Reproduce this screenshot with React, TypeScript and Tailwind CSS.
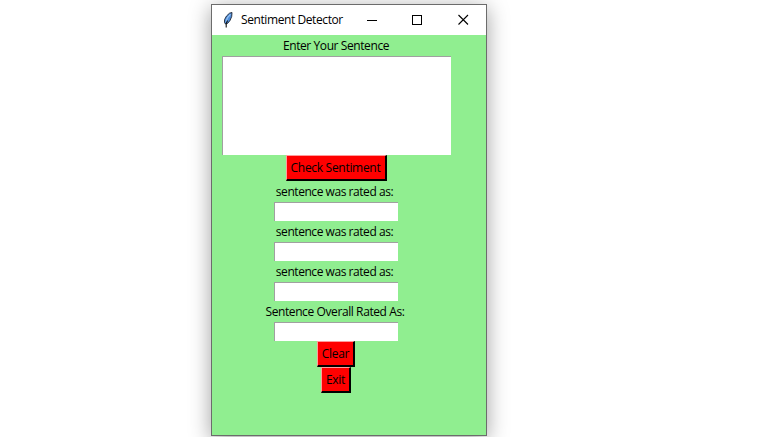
import type { ReactNode } from "react";

function Label({ children, className }: { children: ReactNode; className: string }) {
  return <div className={`flex h-[21px] items-center justify-center pt-px whitespace-nowrap ${className}`}>{children}</div>;
}

function Field() {
  return <input className="block h-[19px] w-[124px] border-t border-l border-[#a0a0a0] bg-white px-1 outline-none" />;
}

function PushButton({ children, className }: { children: ReactNode; className: string }) {
  return (
    <button
      className={`flex h-[26px] items-center justify-center border-t border-r-2 border-b-2 border-l border-t-[#ff9c9c] border-r-black border-b-black border-l-[#ff9c9c] bg-[#ff0000] pt-px whitespace-nowrap ${className}`}
    >
      {children}
    </button>
  );
}

function Feather() {
  return (
    <svg width="10" height="16" viewBox="0 0 10 16" fill="none">
      <path d="M9 .5 6.500 1.200 3.500 4 1.600 7.500 1.500 10.500 2.500 12 4.500 11.500 7 8.500 8.700 4.500Z" fill="#4d8ddb" stroke="#1b2330" strokeWidth=".9" />
      <path d="M7.500 2.300 4.300 6 3 10" stroke="#9cc6f4" strokeWidth="1.100" />
      <path d="M4.500 8.500 3.200 11.500V15.500" stroke="#111" strokeWidth="1.100" />
    </svg>
  );
}

export default function App() {
  return (
    <div className="flex h-[437px] w-[778px] overflow-hidden bg-white pt-1 pl-[211px] font-['Open_Sans','Noto_Sans',sans-serif] text-[12px] leading-4 text-black">
      <main className="h-[432px] w-[276px] border border-[#6c6c6c] bg-[#90ee90] shadow-[0_4px_20px_rgba(0,0,0,0.38)]">
        <header className="flex h-[30px] items-center bg-white pl-[11px]">
          <Feather />
          <h1 className="ml-2 w-[103px] text-[12px] tracking-[-0.41px] whitespace-nowrap">Sentiment Detector</h1>
          <svg className="ml-[23px]" width="102" height="12" viewBox="0 0 102 12" fill="none" stroke="#000" shapeRendering="crispEdges">
            <path d="M0 6.500H10" />
            <rect x="45.500" y="1.500" width="9" height="9" />
            <path d="M91.500 1 101 10.500M101 1 91.500 10.500" shapeRendering="auto" strokeWidth="1.100" />
          </svg>
        </header>
        <section className="ml-[10px] flex w-[228px] flex-col items-center">
          <Label className="tracking-[-0.41px]">Enter Your Sentence</Label>
          <textarea className="block h-[99px] w-[229px] resize-none self-start border-t border-l border-[#a0a0a0] bg-white p-1 outline-none" />
          <PushButton className="w-[101px] tracking-[-0.3px]">Check Sentiment</PushButton>
          <Label className="mr-[3px] tracking-[-0.45px]">sentence was rated as:</Label>
          <Field />
          <Label className="mr-[3px] tracking-[-0.45px]">sentence was rated as:</Label>
          <Field />
          <Label className="mr-[3px] tracking-[-0.45px]">sentence was rated as:</Label>
          <Field />
          <Label className="mr-[2px] tracking-[-0.4px]">Sentence Overall Rated As:</Label>
          <Field />
          <PushButton className="w-[38px] tracking-[-0.3px]">Clear</PushButton>
          <PushButton className="w-[30px] tracking-[-0.3px]">Exit</PushButton>
        </section>
      </main>
    </div>
  );
}
